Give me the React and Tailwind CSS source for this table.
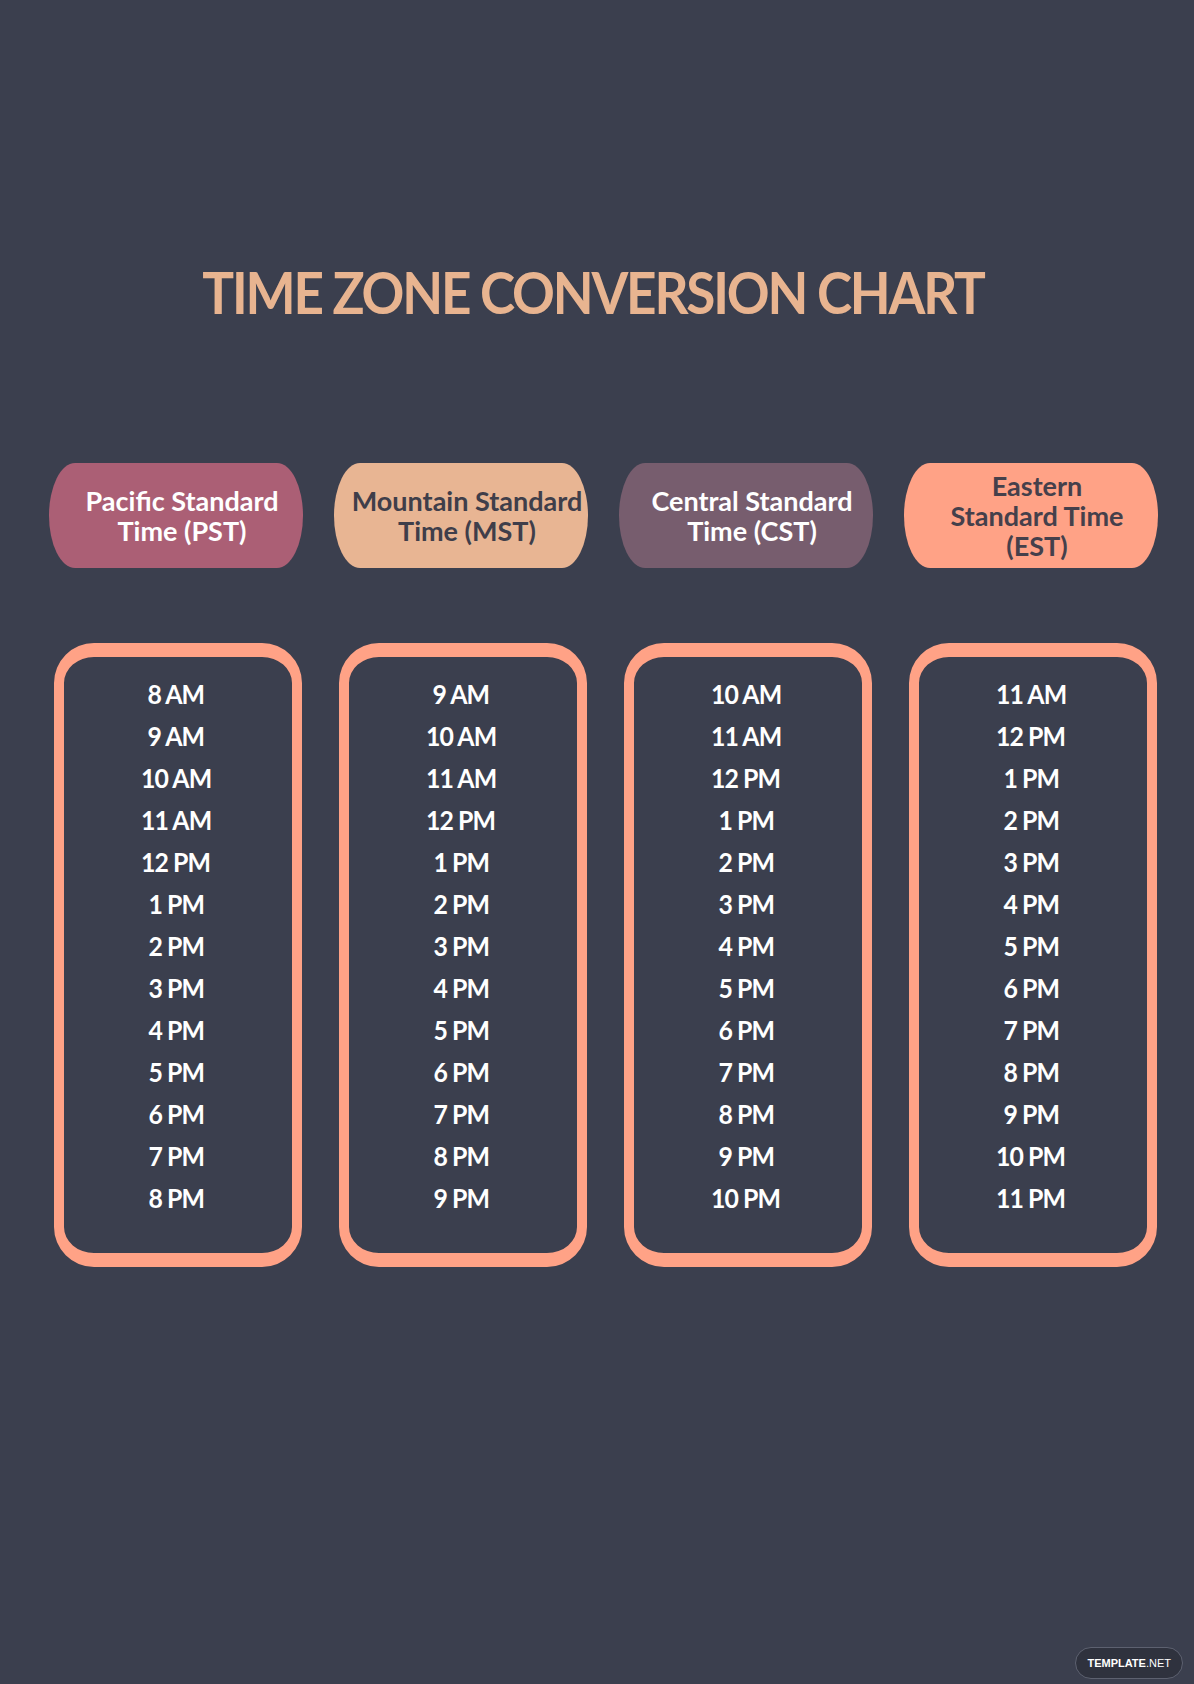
const zones = [
  {
    name: "Pacific Standard Time (PST)",
    lines: ["Pacific Standard", "Time (PST)"],
    pill: "bg-[#ab5f75] text-white",
    start: 8,
  },
  {
    name: "Mountain Standard Time (MST)",
    lines: ["Mountain Standard", "Time (MST)"],
    pill: "bg-[#e8b593] text-[#3f3e4a]",
    start: 9,
  },
  {
    name: "Central Standard Time (CST)",
    lines: ["Central Standard", "Time (CST)"],
    pill: "bg-[#775d6e] text-white",
    start: 10,
  },
  {
    name: "Eastern Standard Time (EST)",
    lines: ["Eastern", "Standard Time", "(EST)"],
    pill: "bg-[#ffa286] text-[#45404b]",
    start: 11,
  },
];

function label(h) {
  const suffix = h < 12 ? "AM" : "PM";
  const hour = h > 12 ? h - 12 : h;
  return `${hour} ${suffix}`;
}

export default function App() {
  return (
    <div className="w-full h-[1684px] bg-[#3b3f4e] relative font-['Lato',sans-serif]">
      <h1 className="pt-[256px] text-center text-[#e8b490] font-bold text-[58px] leading-[72px] tracking-[-2.4px]">
        <span className="inline-block scale-x-[0.915] -ml-[7px]">TIME ZONE CONVERSION CHART</span>
      </h1>

      <div className="mt-[135px] grid grid-cols-4 gap-x-[31px] pl-[49px] pr-[36px]">
        {zones.map((z) => (
          <div key={z.name} className="flex flex-col">
            <div
              className={`h-[105px] rounded-[26px_/_50%] flex flex-col items-center justify-center pl-3 font-bold text-[27px] leading-[30px] ${z.pill}`}
            >
              {z.lines.map((l) => (
                <span key={l} className="inline-block whitespace-nowrap">
                  {l}
                </span>
              ))}
            </div>
            <div className="mt-[75px] ml-[5px] mr-[1px] h-[624px] rounded-[40px] border-x-[10px] border-y-[14px] border-[#ffa286] flex flex-col items-center pt-[16px]">
              {Array.from({ length: 13 }, (_, i) => (
                <span
                  key={i}
                  className="inline-block scale-x-[0.92] text-white font-bold text-[27px] leading-[42px] tracking-[-1px] -ml-[4px] whitespace-nowrap"
                >
                  {label(z.start + i)}
                </span>
              ))}
            </div>
          </div>
        ))}
      </div>

      <div className="absolute right-[11px] top-[1647px] h-[32px] px-[11px] flex items-center rounded-full border border-[#5d6170] bg-[#2f323e] text-[11px] text-white font-['Liberation_Sans',sans-serif]">
        <span className="font-bold">TEMPLATE</span>
        <span>.NET</span>
      </div>
    </div>
  );
}
